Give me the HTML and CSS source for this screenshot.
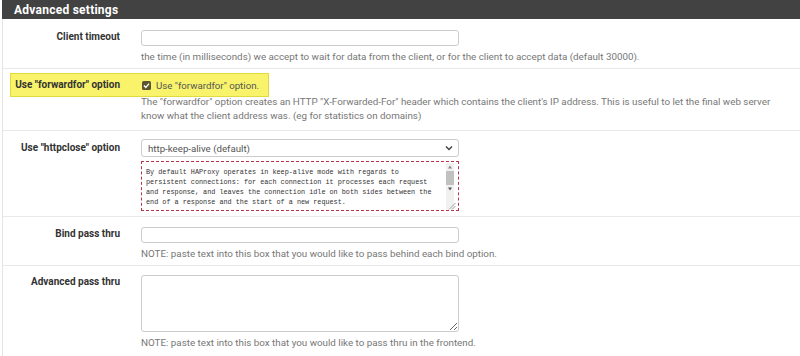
FILE: index.html
```html
<!DOCTYPE html>
<html lang="en">
<head>
  <meta charset="UTF-8">
  <title>Advanced settings</title>
  <link rel="stylesheet" href="styles.css">
</head>
<body>
  <div class="panel">
    <div class="panel-heading">Advanced settings</div>

    <div class="row row-first">
      <div class="label">Client timeout</div>
      <div class="field">
        <input type="text" class="input">
        <div class="help">the time (in milliseconds) we accept to wait for data from the client, or for the client to accept data (default 30000).</div>
      </div>
    </div>

    <div class="row row-marked">
      <div class="mark"></div>
      <div class="label">Use "forwardfor" option</div>
      <div class="field">
        <label class="check">
          <span class="box">
            <svg width="9" height="9" viewBox="0 0 9 9"><rect width="9" height="9" rx="1.5" fill="#5b5530"/><path d="M2 4.6 L3.8 6.4 L7.1 2.6" fill="none" stroke="#fff" stroke-width="1.4"/></svg>
          </span>
          Use "forwardfor" option.
        </label>
        <div class="help help-wide">The "forwardfor" option creates an HTTP "X-Forwarded-For" header which contains the client's IP address. This is useful to let the final web server know what the client address was. (eg for statistics on domains)</div>
      </div>
    </div>

    <div class="row row-select">
      <div class="label">Use "httpclose" option</div>
      <div class="field">
        <div class="select">
          <span>http-keep-alive (default)</span>
          <svg width="8" height="6" viewBox="0 0 8 6"><path d="M1 1.5 L4 4.5 L7 1.5" fill="none" stroke="#444" stroke-width="1.5"/></svg>
        </div>
        <div class="info">
          <div class="info-text">By default HAProxy operates in keep-alive mode with regards to persistent connections: for each connection it processes each request and response, and leaves the connection idle on both sides between the end of a response and the start of a new request.</div>
          <div class="scroll">
            <svg width="8" height="8" viewBox="0 0 8 8"><path d="M2 5.5 L4 2.5 L6 5.5 Z" fill="#888"/></svg>
            <span class="thumb"></span>
            <svg width="8" height="8" viewBox="0 0 8 8"><path d="M2 2.5 L4 5.5 L6 2.5 Z" fill="#555"/></svg>
            <span class="track"></span>
            <svg class="grip" width="8" height="8" viewBox="0 0 8 8"><path d="M7.5 1 L1 7.5 M7.5 4 L4 7.5" stroke="#999" stroke-width="0.9"/></svg>
          </div>
        </div>
      </div>
    </div>

    <div class="row row-bind">
      <div class="label">Bind pass thru</div>
      <div class="field">
        <input type="text" class="input">
        <div class="help">NOTE: paste text into this box that you would like to pass behind each bind option.</div>
      </div>
    </div>

    <div class="row row-last">
      <div class="label">Advanced pass thru</div>
      <div class="field">
        <textarea class="area"></textarea>
        <div class="help">NOTE: paste text into this box that you would like to pass thru in the frontend.</div>
      </div>
    </div>
  </div>
</body>
</html>
```

FILE: styles.css
```css
* {
  margin: 0;
  padding: 0;
  box-sizing: border-box;
}

body {
  font-family: 'Roboto', 'Liberation Sans', sans-serif;
  background: #fff;
  color: #333;
  width: 800px;
  height: 356px;
  overflow: hidden;
}

.panel {
  margin-left: 2px;
  border-left: 1px solid #e4e4e4;
  min-height: 356px;
}

.panel-heading {
  height: 19px;
  margin-left: -1px;
  padding-left: 12px;
  background: #424242;
  color: #fff;
  font-size: 12px;
  font-weight: 700;
  letter-spacing: 0.25px;
  line-height: 20px;
}

.row {
  display: flex;
  border-bottom: 1px solid #e8e8e8;
}

.label {
  width: 138px;
  flex-shrink: 0;
  padding-right: 21px;
  text-align: right;
  font-size: 10px;
  font-weight: 700;
  color: #333;
  line-height: 14px;
}

.field {
  flex: 1;
  position: relative;
  z-index: 1;
}

.input {
  display: block;
  width: 318px;
  height: 16px;
  border: 1px solid #ccc;
  border-radius: 3px;
  background: #fff;
}

.help {
  margin-top: 4px;
  font-size: 9.8px;
  line-height: 14px;
  color: #777;
}

.help-wide {
  max-width: 634px;
}

.row-first {
  padding: 11px 0 4px;
}

/* highlighted row */
.row-marked {
  position: relative;
  padding: 9px 0 7px;
}

.row-marked .label {
  position: relative;
  z-index: 1;
}

.mark {
  position: absolute;
  left: 7px;
  top: 4px;
  width: 259px;
  height: 24px;
  background: #f8f36b;
  border: 1px solid #e3da3c;
}

.check {
  display: flex;
  align-items: center;
  gap: 5px;
  height: 14px;
  font-size: 9.7px;
  color: #555;
}

.box {
  display: flex;
  margin-left: 1px;
}

.row-marked .help {
  margin-top: 3px;
}

/* select + info box */
.row-select {
  padding: 8px 0 5px;
}

.row-select .label {
  padding-top: 2px;
}

.select {
  display: flex;
  align-items: center;
  justify-content: space-between;
  width: 318px;
  height: 18px;
  padding: 0 5px 0 6px;
  border: 1px solid #ccc;
  border-radius: 3px;
  font-size: 9.7px;
  color: #555;
}

.info {
  display: flex;
  width: 318px;
  height: 50px;
  margin-top: 4px;
  padding: 1px 4px 1px 4px;
  border: 1px dashed #b8344c;
}

.info-text {
  flex: 1;
  overflow: hidden;
  padding: 4px 6px 0 0;
  font-family: 'Liberation Mono', monospace;
  font-size: 6.8px;
  line-height: 10px;
  color: #333;
}

.scroll {
  width: 8px;
  display: flex;
  flex-direction: column;
  background: #f1f1f1;
}

.thumb {
  height: 14px;
  background: #c1c1c1;
}

.track {
  flex: 1;
}

.grip {
  margin: 0 -3px -1px 2px;
}

.row-bind {
  padding: 10px 0 4px;
}

.area {
  display: block;
  width: 318px;
  height: 57px;
  border: 1px solid #ccc;
  border-radius: 3px;
  resize: both;
  outline: none;
}

.row-last {
  border-bottom: none;
  padding-top: 9px;
}
```
